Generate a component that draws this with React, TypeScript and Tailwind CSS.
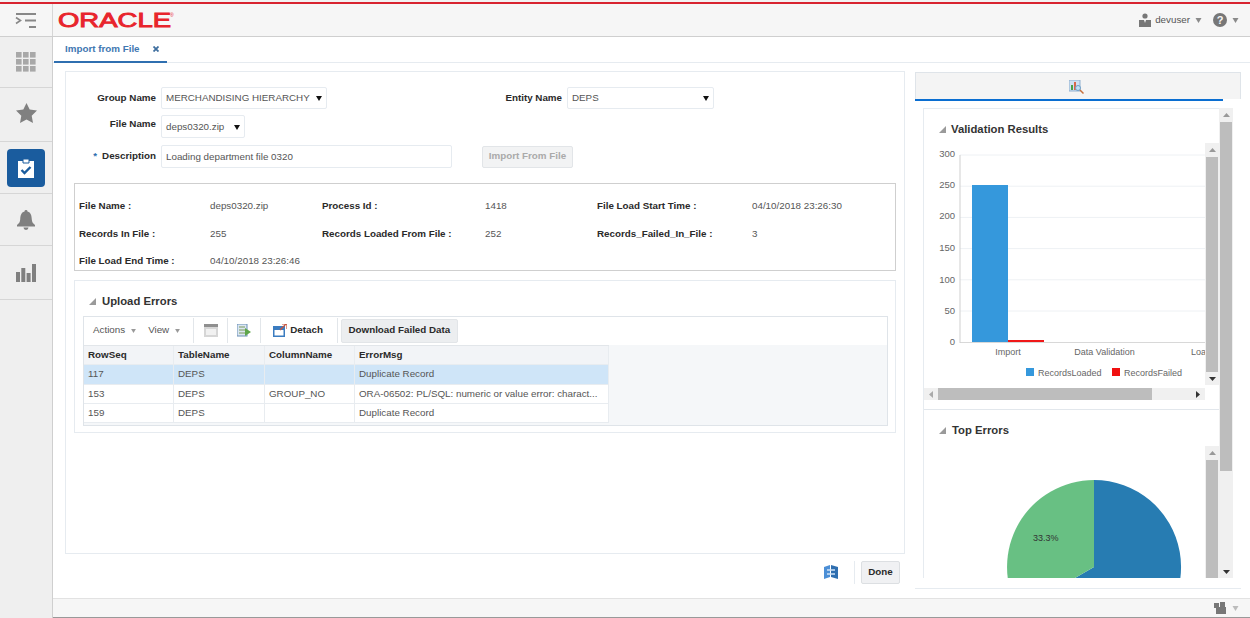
import React from "react";

const Tri = ({ c = "#111", w = 6, h = 5 }: { c?: string; w?: number; h?: number }) => (
  <svg width={w} height={h} viewBox="0 0 6 5" className="shrink-0"><path d="M0 0h6L3 5z" fill={c} /></svg>
);
const Corner = () => (
  <svg width="7" height="7" viewBox="0 0 7 7" className="shrink-0"><path d="M7 0v7H0z" fill="#9a9a9a" /></svg>
);

const Select = ({ text, w, pr }: { text: string; w: string; pr: string }) => (
  <div className={`flex h-full items-center justify-between rounded-[2px] border border-[#e6ebf0] pl-[4px] pt-[1px] text-[9.8px] text-[#555] ${w} ${pr}`}>
    <span className="whitespace-nowrap">{text}</span>
    <Tri />
  </div>
);

const Label = ({ children, w }: { children: React.ReactNode; w: string }) => (
  <div className={`shrink-0 text-right text-[9.8px] font-bold text-[#2a2a2a] ${w}`}>{children}</div>
);

const Info = ({ k, v }: { k: string; v: string }) => (
  <>
    <div className="whitespace-nowrap text-[9.8px] font-bold leading-[13px] text-[#2a2a2a]">{k}</div>
    <div className="whitespace-nowrap text-[9.8px] leading-[13px] text-[#555]">{v}</div>
  </>
);

const Sep = () => <div className="h-[25px] w-px shrink-0 bg-[#e2e6ea]" />;

const Cell = ({ children, head, sel }: { children?: React.ReactNode; head?: boolean; sel?: boolean }) => (
  <div
    className={`flex items-center overflow-hidden whitespace-nowrap border-r border-b border-[#e8ecf0] pl-[4px] text-[9.8px] ${
      head ? "bg-[#f2f4f7] font-bold text-[#2a2a2a]" : sel ? "bg-[#cfe5f8] text-[#555]" : "bg-white text-[#555]"
    }`}
  >
    {children}
  </div>
);

const VBar = ({ children }: { children: React.ReactNode }) => (
  <div className="flex w-[14px] shrink-0 flex-col bg-[#f0f0f0]">{children}</div>
);

const ArrowUp = () => (
  <div className="flex h-[14px] shrink-0 items-center justify-center">
    <svg width="7" height="4" viewBox="0 0 7 4"><path d="M0 4h7L3.5 0z" fill="#999" /></svg>
  </div>
);
const ArrowDown = () => (
  <div className="flex h-[13px] shrink-0 items-center justify-center">
    <svg width="7" height="4" viewBox="0 0 7 4"><path d="M0 0h7L3.5 4z" fill="#333" /></svg>
  </div>
);

const NavCell = ({ h, children }: { h: string; children: React.ReactNode }) => (
  <div className={`flex items-center justify-center border-b border-[#d6d6d6] ${h}`}>{children}</div>
);

export default function App() {
  return (
    <div
      className="flex h-[618px] w-[1250px] flex-col overflow-hidden bg-white text-[#333]"
      style={{ fontFamily: '"Liberation Sans", Arial, sans-serif' }}
    >
      <div className="h-[2px] shrink-0 bg-[#f2f2f2]" />
      <header className="flex h-[35px] shrink-0 items-center border-t-2 border-b border-t-[#d8232f] border-b-[#cfcfcf] bg-[#f6f6f6]">
        <div className="flex h-full w-[53px] shrink-0 items-center justify-center border-r border-[#d6d6d6]">
          <svg width="22" height="17" viewBox="0 0 22 17" fill="none" stroke="#888" strokeWidth="1.6">
            <path d="M1 2h20M10 8.5h11M14 15h7" strokeWidth="2" />
            <path d="M1 5.5l4.5 3-4.5 3" />
          </svg>
        </div>
        <svg width="124" height="18" viewBox="0 0 124 18" className="ml-[4px] shrink-0">
          <text x="1" y="15.5" textLength="113" lengthAdjust="spacingAndGlyphs" fontSize="20" fontWeight="400" fill="#e8242c" stroke="#e8242c" strokeWidth="0.9" style={{ fontFamily: '"Liberation Sans", sans-serif' }}>ORACLE</text>
          <text x="113" y="6" fontSize="5" fill="#e8242c" style={{ fontFamily: '"Liberation Sans", sans-serif' }}>®</text>
        </svg>
        <div className="ml-auto flex items-center pr-[11px]">
          <svg width="12" height="14" viewBox="0 0 12 14" fill="#777"><circle cx="6" cy="3" r="2.6" /><path d="M0 7h12v7H0z" /><path d="M5 7h2l-1 3z" fill="#f6f6f6" /></svg>
          <span className="ml-[4px] text-[9.8px] text-[#555]">devuser</span>
          <span className="ml-[5px]"><Tri c="#8a8a8a" w={7} h={5} /></span>
          <svg width="14" height="14" viewBox="0 0 14 14" className="ml-[11px]">
            <circle cx="7" cy="7" r="7" fill="#777" />
            <text x="7" y="11" textAnchor="middle" fontSize="11" fontWeight="700" fill="#f6f6f6" style={{ fontFamily: '"Liberation Sans", sans-serif' }}>?</text>
          </svg>
          <span className="ml-[5px]"><Tri c="#8a8a8a" w={7} h={5} /></span>
        </div>
      </header>

      <div className="flex min-h-0 flex-1">
        <nav className="flex w-[53px] shrink-0 flex-col border-r border-[#cfcfcf] bg-[#efefef]">
          <NavCell h="h-[51px]">
            <svg width="20" height="20" viewBox="0 0 20 20" fill="#a8a8a8">
              {[0, 7, 14].map((y) => [0, 7, 14].map((x) => <rect key={`${x}-${y}`} x={x} y={y} width="5.6" height="5.6" />))}
            </svg>
          </NavCell>
          <NavCell h="h-[54px] pb-[4px]">
            <svg width="21" height="20" viewBox="0 0 21 20"><path d="M10.5 0l3.2 6.6 7.3 1-5.3 5.1 1.3 7.3-6.5-3.5L4 20l1.3-7.3L0 7.6l7.3-1z" fill="#808080" /></svg>
          </NavCell>
          <NavCell h="h-[52px]">
            <div className="flex h-[38px] w-[38px] items-center justify-center rounded-[4px] bg-[#1a5c9e]">
              <svg width="16" height="20" viewBox="0 0 16 20">
                <path d="M0 3h16v17H0z" fill="#fff" />
                <path d="M5 1h6v4H5z" fill="#fff" stroke="#1a5c9e" strokeWidth="1" />
                <path d="M2 7h12v11H2z" fill="#fff" />
                <path d="M3.5 12l3 3 6-6" fill="none" stroke="#1a5c9e" strokeWidth="2.4" />
              </svg>
            </div>
          </NavCell>
          <NavCell h="h-[52px]">
            <svg width="18" height="20" viewBox="0 0 18 20" fill="#808080"><path d="M9 0a1.5 1.5 0 0 1 1.5 1.6C14 2.5 14.6 6 14.8 9.5c.2 2.5 1.2 4 3.2 5.5v1.5H0V15c2-1.500 3-3 3.200-5.500C3.400 6 4 2.500 7.500 1.600A1.500 1.500 0 0 1 9 0z" /><path d="M6.500 17.500h5a2.500 2.500 0 0 1-5 0z" /></svg>
          </NavCell>
          <NavCell h="h-[54px]">
            <svg width="20" height="18" viewBox="0 0 20 18" fill="#808080"><rect x="0" y="8" width="4" height="10" /><rect x="5.300" y="4" width="4" height="14" /><rect x="10.600" y="9" width="4" height="9" /><rect x="16" y="0" width="4" height="18" /></svg>
          </NavCell>
        </nav>

        <div className="flex min-w-0 flex-1 flex-col">
          <div className="flex h-[26px] shrink-0 border-b border-[#e6ebf0] bg-white">
            <div className="ml-px flex h-[26px] w-[113px] items-center justify-between border-b-2 border-[#2f6fb0] pl-[11px] pr-[8px] text-[9.8px] font-bold text-[#3f78b2]">
              <span className="whitespace-nowrap">Import from File</span>
              <svg width="6" height="6" viewBox="0 0 6 6" stroke="#3f6f9f" strokeWidth="1.800"><path d="M.5.500l5 5M5.500.500l-5 5" /></svg>
            </div>
          </div>

          <main className="flex min-h-0 flex-1 pl-[12px] pt-[8px]">
            <div className="flex w-[840px] shrink-0 flex-col">
              <section className="h-[483px] shrink-0 border border-[#e6ebf0] bg-white pt-[15px]">
                <div className="flex h-[22px] items-center">
                  <Label w="w-[90px] pt-[1px]">Group Name</Label>
                  <div className="ml-[5px] h-full"><Select text="MERCHANDISING HIERARCHY" w="w-[166px]" pr="pr-[4px]" /></div>
                  <Label w="w-[235px] pt-[1px]">Entity Name</Label>
                  <div className="ml-[5px] h-full"><Select text="DEPS" w="w-[147px]" pr="pr-[4px]" /></div>
                </div>
                <div className="mt-[6px] flex h-[23px] items-center">
                  <Label w="w-[90px]"><span className="relative -top-[2px]">File Name</span></Label>
                  <div className="ml-[5px] h-full"><Select text="deps0320.zip" w="w-[84px]" pr="pr-[4px]" /></div>
                </div>
                <div className="mt-[7px] flex h-[23px] items-center">
                  <Label w="w-[90px]"><span className="mr-[5px] text-[#2f6fb0]">*</span>Description</Label>
                  <div className="ml-[5px] flex h-full w-[291px] items-center rounded-[2px] border border-[#e6ebf0] pl-[4px] pt-[1px] text-[9.8px] text-[#555]">Loading department file 0320</div>
                  <div className="ml-[30px] flex h-[22px] w-[91px] items-center justify-center rounded-[2px] border border-[#e2e5e8] bg-[#f2f3f4] pb-[1px] text-[9.8px] font-bold text-[#aaa]">Import From File</div>
                </div>

                <div className="ml-[8px] mt-[15px] h-[88px] w-[822px] border border-[#cfcfcf] pl-[4px] pt-[15px]">
                  <div className="grid grid-cols-[131px_112px_163px_112px_155px_1fr] gap-y-[14.500px]">
                    <Info k="File Name :" v="deps0320.zip" />
                    <Info k="Process Id :" v="1418" />
                    <Info k="File Load Start Time :" v="04/10/2018 23:26:30" />
                    <Info k="Records In File :" v="255" />
                    <Info k="Records Loaded From File :" v="252" />
                    <Info k="Records_Failed_In_File :" v="3" />
                    <Info k="File Load End Time :" v="04/10/2018 23:26:46" />
                  </div>
                </div>

                <div className="ml-[8px] mt-[9px] h-[153px] w-[822px] border border-[#e6ebf0] px-[8px]">
                  <div className="flex h-[35px] items-center pl-[6px] pt-[5px]">
                    <Corner />
                    <span className="ml-[6px] text-[11.300px] font-bold text-[#333]">Upload Errors</span>
                  </div>
                  <div className="w-[805px] border border-[#dfe4e9] bg-[#f5f7f9]">
                    <div className="flex h-[28px] items-center bg-white pb-[1px] text-[9.800px] text-[#555]">
                      <span className="ml-[9px]">Actions</span>
                      <span className="ml-[5px]"><Tri c="#999" w={7} h={4} /></span>
                      <span className="ml-[11px]">View</span>
                      <span className="ml-[5px]"><Tri c="#999" w={7} h={4} /></span>
                      <div className="ml-[12px]"><Sep /></div>
                      <svg width="14" height="13" viewBox="0 0 14 13" className="ml-[10px]"><rect width="14" height="13" fill="#d6d6d6" /><rect y="0" width="14" height="3" fill="#8f8f8f" /><rect x="2" y="5" width="10" height="6" fill="#f1f1f1" /></svg>
                      <div className="ml-[9px]"><Sep /></div>
                      <svg width="14" height="13" viewBox="0 0 14 13" className="ml-[9px]"><rect width="10" height="12" fill="#dbe6f2" stroke="#6a8fb5" /><path d="M2 3h6M2 6h6M2 9h6" stroke="#7a9a5a" /><path d="M8 4l6 4-6 4z" fill="#5ea64a" /></svg>
                      <div className="ml-[9px]"><Sep /></div>
                      <svg width="14" height="13" viewBox="0 0 14 13" className="ml-[12px]"><rect y="2" width="12" height="11" fill="#3b7cc0" /><rect x="1.500" y="6" width="9" height="5.500" fill="#fff" /><path d="M7 6l6-6M9 0h5v5" stroke="#c8553d" strokeWidth="1.200" fill="none" /></svg>
                      <span className="ml-[3px] font-bold text-[#2a2a2a]">Detach</span>
                      <div className="ml-[14px]"><Sep /></div>
                      <div className="ml-[3px] flex h-[24px] w-[117px] items-center justify-center rounded-[2px] border border-[#e2e5e8] bg-[#eceef0] font-bold text-[#2a2a2a]">Download Failed Data</div>
                    </div>
                    <div className="grid w-[525px] grid-cols-[90px_91px_90px_254px] grid-rows-[19px_20px_19px_19px] border-t border-[#e2e6ea]">
                      <Cell head>RowSeq</Cell><Cell head>TableName</Cell><Cell head>ColumnName</Cell><Cell head>ErrorMsg</Cell>
                      <Cell sel>117</Cell><Cell sel>DEPS</Cell><Cell sel /><Cell sel>Duplicate Record</Cell>
                      <Cell>153</Cell><Cell>DEPS</Cell><Cell>GROUP_NO</Cell><Cell>ORA-06502: PL/SQL: numeric or value error: charact...</Cell>
                      <Cell>159</Cell><Cell>DEPS</Cell><Cell /><Cell>Duplicate Record</Cell>
                    </div>
                    <div className="h-[2px]" />
                  </div>
                </div>
              </section>
              <div className="mt-[6px] flex h-[24px] items-center justify-end pr-[5px]">
                <svg width="14" height="14" viewBox="0 0 14 14">
                  <path d="M0 2l6-2v12l-6 2z" fill="#4c8fd6" />
                  <path d="M7 0l7 2v12l-7-2z" fill="#2f6fb0" />
                  <path d="M3 5h8M3 9h8" stroke="#cfe3f7" strokeWidth="1.500" />
                </svg>
                <div className="ml-[16px] h-[23px] w-px bg-[#e6ebf0]" />
                <div className="ml-[6px] flex h-[23px] w-[39px] items-center justify-center rounded-[2px] border border-[#dcdfe2] bg-[#f0f1f3] text-[9.800px] font-bold text-[#2a2a2a]">Done</div>
              </div>
            </div>

            <aside className="ml-[10px] flex w-[326px] shrink-0 flex-col pt-[1px]">
              <div className="h-[29px] shrink-0">
                <div className="flex h-[27px] items-center justify-center border border-b-0 border-[#dfe4e9] bg-[#f4f4f4] pr-[4px] pt-[2px]">
                  <svg width="15" height="14" viewBox="0 0 15 14">
                    <rect width="11" height="11" fill="#cfe0f2" stroke="#8fb0d0" />
                    <rect x="2" y="5" width="2" height="5" fill="#4aa04a" />
                    <rect x="5" y="2" width="2" height="8" fill="#d8674a" />
                    <circle cx="9" cy="8" r="2.500" fill="#bfe0f5" stroke="#6f9fc8" />
                    <path d="M11 10l3.500 3.500" stroke="#c8703d" strokeWidth="1.500" />
                  </svg>
                </div>
                <div className="h-[2px] w-[308px] bg-[#0a6ed1]" />
              </div>

              <div className="ml-[8px] mt-[7px] flex h-[470px] w-[310px] shrink-0">
                <div className="flex w-[296px] shrink-0 flex-col border-l border-[#e6ebf0]">
                  <div className="flex h-[302px] shrink-0 flex-col border-b border-[#e2e7ec]">
                    <div className="flex h-[35px] items-center border-t border-[#e6ebf0] pl-[15px] pt-[6px]">
                      <Corner />
                      <span className="ml-[5px] text-[11.300px] font-bold text-[#333]">Validation Results</span>
                    </div>
                    <div className="flex h-[242px] shrink-0">
                      <svg width="281" height="242" viewBox="924 143 281 242" style={{ fontFamily: '"Liberation Sans", sans-serif' }}>
                        {[155, 186.200, 217.400, 248.600, 279.800, 311].map((y) => (
                          <line key={y} x1="960" x2="1205" y1={y} y2={y} stroke="#eef1f4" />
                        ))}
                        <line x1="960" x2="1205" y1="342.500" y2="342.500" stroke="#d8d8d8" />
                        <line x1="960" x2="960" y1="155" y2="343" stroke="#cfcfcf" />
                        {[["300", 153.500], ["250", 184.500], ["200", 215.500], ["150", 247], ["100", 279], ["50", 310], ["0", 341]].map(([t, y]) => (
                          <text key={t} x="955" y={Number(y) + 3.500} textAnchor="end" fontSize="9.500" fill="#666">{t}</text>
                        ))}
                        <rect x="972" y="185" width="36" height="157" fill="#3598dc" />
                        <rect x="1008" y="340" width="36" height="2" fill="#f01818" />
                        <text x="1008" y="355" textAnchor="middle" fontSize="9" fill="#666">Import</text>
                        <text x="1104.500" y="355" textAnchor="middle" fontSize="9" fill="#666">Data Validation</text>
                        <text x="1191" y="355" fontSize="9" fill="#666">Load</text>
                        <rect x="1026" y="368" width="8" height="8" fill="#3598dc" />
                        <text x="1038" y="375.500" fontSize="9" fill="#666">RecordsLoaded</text>
                        <rect x="1112" y="368" width="8" height="8" fill="#f01010" />
                        <text x="1124" y="375.500" fontSize="9" fill="#666">RecordsFailed</text>
                      </svg>
                      <VBar>
                        <ArrowUp />
                        <div className="mx-px flex-1 bg-[#bdbdbd]" />
                        <ArrowDown />
                      </VBar>
                    </div>
                    <div className="mt-[3px] flex h-[12px] w-[281px] items-center bg-[#f0f0f0]">
                      <div className="flex w-[14px] justify-center"><svg width="4" height="7" viewBox="0 0 4 7"><path d="M4 0v7L0 3.500z" fill="#aaa" /></svg></div>
                      <div className="h-full w-[214px] bg-[#bdbdbd]" />
                      <div className="flex flex-1 justify-end pr-[5px]"><svg width="4" height="7" viewBox="0 0 4 7"><path d="M0 0v7l4-3.500z" fill="#333" /></svg></div>
                    </div>
                  </div>
                  <div className="flex min-h-0 flex-1 flex-col">
                    <div className="flex h-[36px] shrink-0 items-center pl-[15px] pt-[4px]">
                      <Corner />
                      <span className="ml-[6px] text-[11.300px] font-bold text-[#333]">Top Errors</span>
                    </div>
                    <div className="flex min-h-0 flex-1">
                      <svg width="281" height="132" viewBox="924 446 281 132" style={{ fontFamily: '"Liberation Sans", sans-serif' }}>
                        <path d="M1094 567V480A87 87 0 1 1 1018.700 610.500Z" fill="#277cb2" />
                        <path d="M1094 567V480A87 87 0 0 0 1018.700 610.500Z" fill="#68c083" />
                        <text x="1033" y="541" fontSize="9" fill="#333">33.3%</text>
                      </svg>
                      <VBar>
                        <ArrowUp />
                        <div className="mx-px flex-1 bg-[#bdbdbd]" />
                      </VBar>
                    </div>
                  </div>
                </div>
                <VBar>
                  <ArrowUp />
                  <div className="mx-px h-[349px] bg-[#bdbdbd]" />
                  <div className="flex-1" />
                  <ArrowDown />
                </VBar>
              </div>
              <div className="mt-[10px] h-px w-full bg-[#e6ebf0]" />
            </aside>
          </main>

          <footer className="flex h-[20px] shrink-0 items-center justify-end border-t border-b border-t-[#e2e2e2] border-b-[#999] bg-[#f6f6f6] pr-[11px]">
            <svg width="14" height="12" viewBox="0 0 14 12" fill="#777"><rect x="1" y="1" width="5" height="5" /><rect x="7" y="0" width="5" height="5" /><rect x="3" y="5" width="10" height="7" /></svg>
            <span className="ml-[5px]"><Tri c="#bbb" w={7} h={5} /></span>
          </footer>
        </div>
      </div>
    </div>
  );
}
